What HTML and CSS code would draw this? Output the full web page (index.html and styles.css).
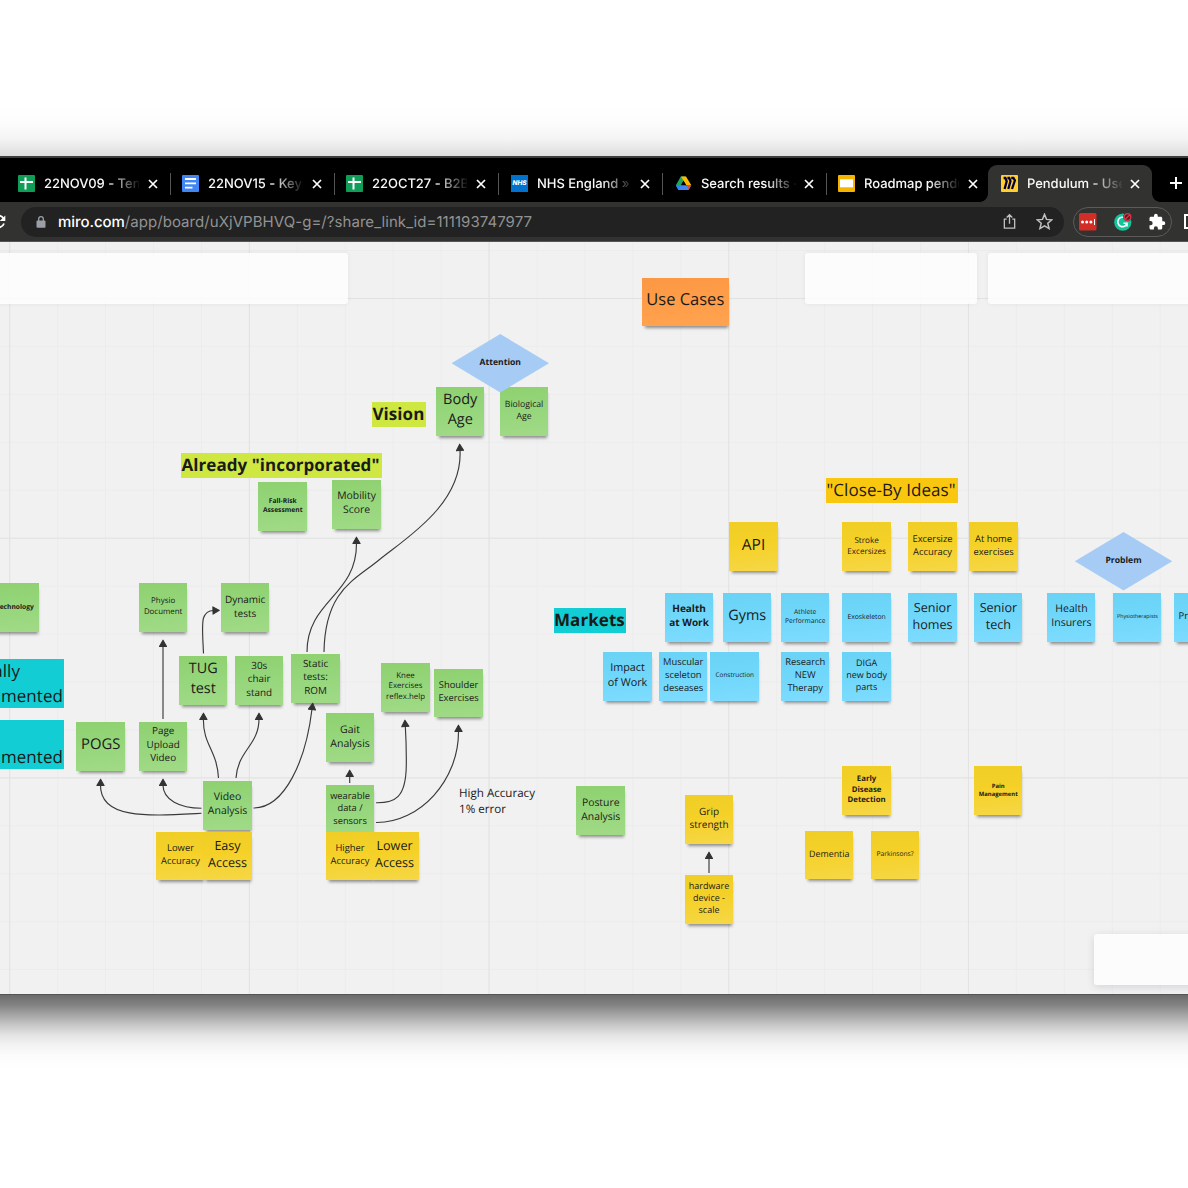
FILE: index.html
```html
<!DOCTYPE html>
<html lang="en">
<head>
<meta charset="utf-8">
<title>Pendulum - Use Cases</title>
<link rel="stylesheet" href="styles.css">
</head>
<body>
<div class="glow-top"></div>
<main class="window">
  <header class="tabs">
    <div class="tab first"><i class="sep"></i>
      <svg class="fav" viewBox="0 0 17 17"><rect width="17" height="17" rx="1" fill="#0f9d58"/><path d="M7.5 2.5v12M2 7h13" stroke="#fff" stroke-width="2"/></svg>
      <span class="title">22NOV09 - Tensor</span><svg class="close" viewBox="0 0 10 10"><path d="M1 1l8 8M9 1L1 9"/></svg></div>
    <div class="tab"><i class="sep"></i>
      <svg class="fav" viewBox="0 0 17 17"><rect width="17" height="17" rx="1" fill="#4285f4"/><path d="M3 4h11M3 8.3h11M3 12.6h7.500" stroke="#fff" stroke-width="1.800"/></svg>
      <span class="title">22NOV15 - Key P</span><svg class="close" viewBox="0 0 10 10"><path d="M1 1l8 8M9 1L1 9"/></svg></div>
    <div class="tab"><i class="sep"></i>
      <svg class="fav" viewBox="0 0 17 17"><rect width="17" height="17" rx="1" fill="#0f9d58"/><path d="M7.500 2.500v12M2 7h13" stroke="#fff" stroke-width="2"/></svg>
      <span class="title">22OCT27 - B2B S</span><svg class="close" viewBox="0 0 10 10"><path d="M1 1l8 8M9 1L1 9"/></svg></div>
    <div class="tab shifted"><i class="sep"></i>
      <span class="fav nhs">NHS</span>
      <span class="title">NHS England » S</span><svg class="close" viewBox="0 0 10 10"><path d="M1 1l8 8M9 1L1 9"/></svg></div>
    <div class="tab shifted"><i class="sep"></i>
      <svg class="fav" viewBox="0 0 17 17"><path d="M5.800 1.500h4.800L4 14.700 1 10z" fill="#1fa463"/><path d="M6 1.500h5L16.200 10H11z" fill="#ffba00"/><path d="M3.700 10.300h12.500L13.600 15H3.400L1 10.700z" fill="#4285f4"/><path d="M12 10h4.200l-2.500 4.600z" fill="#ea4335"/><path d="M1 10h4.700l-2.300 4.700z" fill="#2684fc"/><path d="M8.500 5.800L11 10H6z" fill="#000"/></svg>
      <span class="title">Search results - G</span><svg class="close" viewBox="0 0 10 10"><path d="M1 1l8 8M9 1L1 9"/></svg></div>
    <div class="tab"><i class="sep"></i>
      <svg class="fav" viewBox="0 0 17 17"><rect width="17" height="17" rx="1" fill="#f4b400"/><rect x="2" y="4.300" width="13" height="8" fill="#fff"/></svg>
      <span class="title">Roadmap pendulum</span><svg class="close" viewBox="0 0 10 10"><path d="M1 1l8 8M9 1L1 9"/></svg></div>
    <div class="tab active"><i class="sep"></i>
      <svg class="fav" viewBox="0 0 17 17"><rect width="17" height="17" rx="1" fill="#ffd02f"/><path d="M2.600 3h1.800l1.300 3.200L3.600 14M6.400 3h1.800l1.300 3L7.300 14M10.200 3h2.200l1.500 2.500L11 14" fill="none" stroke="#050038" stroke-width="2.300"/></svg>
      <span class="title">Pendulum - Use C</span><svg class="close" viewBox="0 0 10 10"><path d="M1 1l8 8M9 1L1 9"/></svg></div>
    <svg class="plus" viewBox="0 0 14 14"><path d="M7 1v12M1 7h12"/></svg>
  </header>
  <nav class="toolbar">
    <svg class="reload" viewBox="0 0 16 16"><path d="M13.500 4.500A6 6 0 1 0 14 9.500" fill="none" stroke="#fff" stroke-width="1.800"/><path d="M15.300 1.500v5.500H9.800z" fill="#fff"/></svg>
    <div class="omnibox">
      <svg class="lock" viewBox="0 0 10 12"><rect x=".5" y="4.500" width="9" height="7.300" rx="1" fill="#9aa0a6"/><path d="M2.700 5V3a2.300 2.300 0 0 1 4.600 0v2" fill="none" stroke="#9aa0a6" stroke-width="1.300"/></svg>
      <span class="url"><b>miro.com</b>/app/board/uXjVPBHVQ-g=/?share_link_id=111193747977</span>
      <svg class="share" viewBox="0 0 16 18"><path d="M5 6.500H2.500v9.500h11V6.500H11M8 11.500V2M5 4.800L8 1.800l3 3"/></svg>
      <svg class="star" viewBox="0 0 16 16"><path d="M8 1.300l1.900 4.700 5 .4-3.800 3.300 1.200 4.900L8 12l-4.300 2.600 1.200-4.900L1.100 6.400l5-.4z"/></svg>
    </div>
    <div class="extensions">
      <svg viewBox="0 0 18 18"><rect width="17.500" height="17.500" rx="1.500" fill="#d32d27"/><circle cx="3.500" cy="9" r="1.500" fill="#fff"/><circle cx="7.700" cy="9" r="1.500" fill="#fff"/><circle cx="11.900" cy="9" r="1.500" fill="#fff"/><path d="M15.500 6v6" stroke="#fff"/></svg>
      <svg viewBox="0 0 18 18"><circle cx="8.800" cy="9.200" r="8.600" fill="#15c39a"/><path d="M11.500 5.300A4.700 4.700 0 1 0 13 10.300H9.500M13 10v3.500" fill="none" stroke="#fff" stroke-width="1.600"/><circle cx="13.500" cy="4" r="4.300" fill="#323230"/><circle cx="13.500" cy="4" r="3.300" fill="#45232d" stroke="#e0324b" stroke-width="1.300"/><path d="M11.300 6.200l4.400-4.400" stroke="#e0324b" stroke-width="1.300"/></svg>
      <svg viewBox="0 0 24 24"><path d="M20.500 11H19V7c0-1.100-.9-2-2-2h-4V3.500a2.500 2.500 0 0 0-5 0V5H4c-1.100 0-2 .9-2 2v3.800h1.500a2.700 2.700 0 0 1 0 5.400H2V20c0 1.100.9 2 2 2h3.800v-1.500a2.700 2.700 0 0 1 5.400 0V22H17c1.100 0 2-.9 2-2v-4h1.500a2.500 2.500 0 0 0 0-5z" fill="#fff"/></svg>
    </div>
    <i class="panel-toggle"></i>
  </nav>
  <section class="board">
    <span class="label vision">Vision</span>
    <span class="label incorporated">Already "incorporated"</span>
    <span class="label ideas">"Close-By Ideas"</span>
    <span class="label markets">Markets</span>
    <div class="label status partial"><p>ally</p><p>mented</p></div>
    <div class="label status notyet"><p>&nbsp;</p><p>mented</p></div>
    <p class="caption">High Accuracy<br>1% error</p>

    <div class="note orange use-cases">Use Cases</div>
    <div class="note green body-age">Body<br>Age</div>
    <div class="note green small bio-age">Biological<br>Age</div>
    <div class="note green bold fall-risk">Fall-Risk<br>Assessment</div>
    <div class="note green mobility">Mobility<br>Score</div>
    <div class="note green bold small technology">Technology</div>
    <div class="note green small physio">Physio<br>Document</div>
    <div class="note green small dynamic">Dynamic<br>tests</div>
    <div class="note green tug">TUG<br>test</div>
    <div class="note green chair">30s<br>chair<br>stand</div>
    <div class="note green static">Static<br>tests:<br>ROM</div>
    <div class="note green small knee">Knee<br>Exercises<br>reflex.help</div>
    <div class="note green small shoulder">Shoulder<br>Exercises</div>
    <div class="note green pogs">POGS</div>
    <div class="note green upload">Page<br>Upload<br>Video</div>
    <div class="note green small gait">Gait<br>Analysis</div>
    <div class="note green video">Video<br>Analysis</div>
    <div class="note green small wearable">wearable<br>data /<br>sensors</div>
    <div class="note green small posture">Posture<br>Analysis</div>
    <div class="note yellow small lower-acc">Lower<br>Accuracy</div>
    <div class="note yellow easy">Easy<br>Access</div>
    <div class="note yellow small higher-acc">Higher<br>Accuracy</div>
    <div class="note yellow lower-access">Lower<br>Access</div>
    <div class="note yellow api">API</div>
    <div class="note yellow small stroke">Stroke<br>Excersizes</div>
    <div class="note yellow small accuracy">Excersize<br>Accuracy</div>
    <div class="note yellow small home">At home<br>exercises</div>
    <div class="note blue bold health-work">Health<br>at Work</div>
    <div class="note blue gyms">Gyms</div>
    <div class="note blue athlete">Athlete<br>Performance</div>
    <div class="note blue small exo">Exoskeleton</div>
    <div class="note blue senior-homes">Senior<br>homes</div>
    <div class="note blue senior-tech">Senior<br>tech</div>
    <div class="note blue insurers">Health<br>Insurers</div>
    <div class="note blue small physios">Physiotherapists</div>
    <div class="note blue small providers">Pr</div>
    <div class="note blue small impact">Impact<br>of Work</div>
    <div class="note blue small muscular">Muscular<br>sceleton<br>deseases</div>
    <div class="note blue small construction">Construction</div>
    <div class="note blue small research">Research<br>NEW<br>Therapy</div>
    <div class="note blue diga">DIGA<br>new body<br>parts</div>
    <div class="note yellow bold small early">Early<br>Disease<br>Detection</div>
    <div class="note yellow bold small pain">Pain<br>Management</div>
    <div class="note yellow small dementia">Dementia</div>
    <div class="note yellow parkinsons">Parkinsons?</div>
    <div class="note yellow grip">Grip<br>strength</div>
    <div class="note yellow hardware">hardware<br>device -<br>scale</div>
    <div class="diamond attention">Attention</div>
    <div class="diamond problem">Problem</div>

    <svg class="arrows" viewBox="0 241 1188 753">
      <defs><marker id="tip" viewBox="0 0 8 8" refX="1.500" refY="4" markerWidth="8.500" markerHeight="8.500" markerUnits="userSpaceOnUse" orient="auto"><path d="M1 .6L7 4 1 7.400z" fill="#333" stroke="#333" stroke-linejoin="round"/></marker></defs>
      <g fill="none" stroke="#3a3a3a" stroke-width="1.150" marker-end="url(#tip)">
        <path d="M163 719V646"/>
        <path d="M203.500 653.500C203 640 201.500 625 203.500 618Q206 610.700 213.500 610.500"/>
        <path d="M218.500 778C217 750 203 745 203.400 719"/>
        <path d="M236 778C238 750 259 745 259 719"/>
        <path d="M201.500 808.300C180 808 163 800 163 785"/>
        <path d="M201.500 813.300C150 816 100 820 100.500 785"/>
        <path d="M253.500 808C285 808 306 760 312 709"/>
        <path d="M307 652C307 600 357 596 356.500 543"/>
        <path d="M324 652C325 590 355 580 379 560S463 505 460 450"/>
        <path d="M349.700 783V776"/>
        <path d="M376 802.700C395 803 406 798 406.300 765Q406.500 745 405.300 726"/>
        <path d="M376 822.500C420 823 459 780 458.500 731"/>
        <path d="M709 873V858"/>
      </g>
    </svg>
    <div class="panel panel-left"></div>
    <div class="panel panel-mid"></div>
    <div class="panel panel-right"></div>
    <div class="panel panel-zoom"></div>
  </section>
</main>
<div class="glow-bottom"></div>
</body>
</html>
```
FILE: styles.css
```css
* { box-sizing: border-box; }
body { margin: 0; width: 1188px; height: 1188px; overflow: hidden; background: #fff; display: flex; flex-direction: column; text-rendering: geometricPrecision; }
p { margin: 0; }
.glow-top { height: 156px; flex: none; background: linear-gradient(#fff 105px, #fdfdfd 120px, #f5f5f5 138px, #dedede 156px); }
.glow-bottom { height: 193px; flex: none; background: linear-gradient(#6b6b6b 0, #838383 10px, #a5a5a5 20px, #c7c7c7 30px, #e3e3e3 40px, #f3f3f3 50px, #fcfcfc 62px, #fff 76px); }
.window { height: 839px; flex: none; display: flex; flex-direction: column; border-top: 2px solid #3d3d3d; overflow: hidden; }

/* tab strip */
.tabs { height: 44px; flex: none; background: #000; display: flex; align-items: flex-end; padding-left: 4px; overflow: hidden; }
.tab { width: 164px; height: 37px; flex: none; display: flex; align-items: center; padding-left: 2px; font: 500 13px/18px Inter, sans-serif; color: #f8f8f8; position: relative; }
.tab.active { background: #323230; border-radius: 9px 9px 0 0; }
.tab.active::before, .tab.active::after { content: ""; position: absolute; bottom: 0; width: 8px; height: 8px; }
.tab.active::before { left: -8px; background: radial-gradient(circle at 0 0, transparent 7.500px, #323230 8px); }
.tab.active::after { right: -8px; background: radial-gradient(circle at 100% 0, transparent 7.500px, #323230 8px); }
.sep { width: 1px; height: 22px; background: #555; margin-right: 11px; flex: none; }
.first .sep, .active .sep { visibility: hidden; }
.shifted .sep { margin-right: 12px; }
.active .sep { margin-right: 10px; }
.fav { width: 17px; height: 17px; flex: none; margin-right: 9px; }
.nhs { background: #0072ce; color: #fff; font: italic 800 6.500px/17px Inter, sans-serif; text-align: center; }
.title { width: 95px; flex: none; white-space: nowrap; overflow: hidden; letter-spacing: -.03px; mask-image: linear-gradient(90deg, #000 65px, transparent 97px); }
.close { width: 10px; height: 10px; margin-left: 9px; flex: none; fill: none; stroke: #fff; stroke-width: 1.700; }
.shifted .close, .active .close { margin-left: 8.300px; }
.plus { width: 14px; height: 14px; flex: none; margin: 0 0 12px 17px; fill: none; stroke: #fff; stroke-width: 2; }

/* toolbar */
.toolbar { height: 40px; flex: none; background: #323230; display: flex; align-items: center; border-bottom: 1px solid #555; margin-bottom: -1px; position: relative; z-index: 1; }
.reload { width: 16px; height: 16px; margin-left: -10px; flex: none; }
.omnibox { width: 1043px; height: 30px; margin-left: 15px; flex: none; border-radius: 15px; background: #222; display: flex; align-items: center; padding: 0 11px 0 15px; }
.lock { width: 10px; height: 12px; margin-right: 12px; }
.url { flex: 1; font: 400 15px/20px Inter, sans-serif; letter-spacing: .055px; color: #929292; white-space: nowrap; }
.url b { font-weight: 500; color: #fff; letter-spacing: -.06px; }
.share, .star { fill: none; stroke: #c0c0c0; stroke-width: 1.400; }
.share { width: 15px; height: 17px; margin-right: 19px; }
.star { width: 17px; height: 17px; }
.extensions { width: 99px; height: 30px; margin-left: 9px; flex: none; border: 1px solid #5b5b5b; border-radius: 15px; display: flex; align-items: center; justify-content: space-between; padding: 0 5px; }
.extensions svg { width: 18px; height: 18px; flex: none; }
.panel-toggle { width: 15px; height: 15px; flex: none; margin-left: 12px; border: 2px solid #fff; }

/* board canvas */
.board { height: 754px; flex: none; position: relative; overflow: hidden; border-bottom: 1px solid #555; background-color: #f1f1f1; font-family: "Open Sans", sans-serif; color: #1a1a1a;
  background-image: linear-gradient(90deg, #e2e2e2 1px, transparent 1px), linear-gradient(#e2e2e2 1px, transparent 1px), linear-gradient(90deg, #ececec 1px, transparent 1px), linear-gradient(#ececec 1px, transparent 1px);
  background-size: 239.700px 100%, 100% 239.700px, 47.940px 100%, 100% 47.940px;
  background-position: 9.200px 0, 0 57px, 9.200px 0, 0 9px; }
.arrows { position: absolute; left: 0; top: 0; width: 1188px; height: 753px; }
.label { position: absolute; font-size: 17px; letter-spacing: .06px; line-height: 24.500px; white-space: nowrap; }
.vision { left: 372px; top: 161px; width: 53.500px; padding-left: .5px; background: #cee741; font-weight: 700; }
.incorporated { left: 181px; top: 212px; width: 201px; padding-left: .5px; background: #cee741; font-weight: 700; }
.ideas { left: 826px; top: 237px; width: 132.300px; padding-left: .5px; background: #fac710; }
.markets { left: 554px; top: 367px; width: 72.400px; background: #12cdd4; font-weight: 700; }
.status { left: 0; width: 64px; height: 49px; background: #12cdd4; text-align: right; padding-right: 1px; }
.status p:first-child { padding-right: 43px; margin-left: -20px; }
.partial { top: 418px; }
.notyet { top: 479px; }
.caption { position: absolute; left: 459px; top: 544.800px; font-size: 11.600px; line-height: 16.200px; white-space: nowrap; }
.note { position: absolute; left: calc(var(--x) - .3px); top: calc(var(--y) - 241.300px); width: 48.500px; height: 48.500px; padding: 0 0 2.800px .6px; display: flex; align-items: center; justify-content: center; text-align: center; white-space: nowrap; font-size: var(--s); line-height: 1.360; box-shadow: 1px 4px 3px -2px rgba(0, 0, 0, .42); }
.small { padding-bottom: 1.300px; }
.bold { font-weight: 700; }
.green { background: linear-gradient(175deg, #8fd070, #95d67b 45%, #a1da86); }
.yellow { background: linear-gradient(175deg, #f0ce25, #f5d128 45%, #f6d746); }
.blue { background: linear-gradient(175deg, #69d2f5, #6fd7fa 45%, #7edcff); }
.orange { background: linear-gradient(175deg, #fb9845, #ff9d48 50%, #ffa350); }
.use-cases { --x: 641.800px; --y: 277.800px; --s: 16.500px; width: 87.500px; padding: 0 0 4.500px; }
.body-age { --x: 436px; --y: 387.500px; --s: 14.500px; }
.bio-age { --x: 499.800px; --y: 387.500px; --s: 8.700px; }
.fall-risk { --x: 258.500px; --y: 482.500px; --s: 6.700px; }
.mobility { --x: 332.300px; --y: 480.500px; --s: 10.400px; }
.technology { --x: -9.500px; --y: 583.500px; --s: 6.700px; }
.physio { --x: 138.900px; --y: 583.500px; --s: 7.900px; }
.dynamic { --x: 220.900px; --y: 583.500px; --s: 10px; }
.tug { --x: 179px; --y: 656.500px; --s: 14.400px; }
.chair { --x: 235px; --y: 656.500px; --s: 9.900px; }
.static { --x: 291.300px; --y: 654.500px; --s: 9.900px; }
.knee { --x: 381.300px; --y: 663.500px; --s: 7.900px; }
.shoulder { --x: 434.300px; --y: 668.800px; --s: 9.400px; }
.pogs { --x: 76.500px; --y: 722.300px; --s: 14.800px; padding-bottom: 4px; }
.upload { --x: 138.900px; --y: 722.300px; --s: 9.900px; padding-bottom: 4px; }
.gait { --x: 325.800px; --y: 713.500px; --s: 10.500px; }
.video { --x: 203.300px; --y: 781.300px; --s: 10.500px; }
.wearable { --x: 325.800px; --y: 785.500px; --s: 9.300px; }
.posture { --x: 576.500px; --y: 786.500px; --s: 10.400px; }
.lower-acc { --x: 156.300px; --y: 831.800px; --s: 9.400px; }
.easy { --x: 203.300px; --y: 831.800px; --s: 12.600px; }
.higher-acc { --x: 325.800px; --y: 831.800px; --s: 9.400px; }
.lower-access { --x: 370.300px; --y: 831.800px; --s: 12.600px; }
.api { --x: 729.300px; --y: 522.700px; --s: 15.500px; padding-bottom: 4px; }
.stroke { --x: 842.300px; --y: 522.700px; --s: 8.100px; }
.accuracy { --x: 908.300px; --y: 522.700px; --s: 9.400px; }
.home { --x: 969.300px; --y: 522.700px; --s: 9.400px; }
.health-work { --x: 664.800px; --y: 593.300px; --s: 10px; }
.gyms { --x: 723px; --y: 593.300px; --s: 14.400px; }
.athlete { --x: 781px; --y: 593.300px; --s: 6.700px; }
.exo { --x: 842.300px; --y: 593.300px; --s: 6.800px; }
.senior-homes { --x: 908.300px; --y: 593.300px; --s: 12.600px; }
.senior-tech { --x: 974.200px; --y: 593.300px; --s: 12.600px; }
.insurers { --x: 1047.200px; --y: 593.300px; --s: 10.500px; }
.physios { --x: 1113.200px; --y: 593.300px; --s: 5.300px; }
.providers { --x: 1174.300px; --y: 593.300px; --s: 9.500px; justify-content: flex-start; padding-left: 4.500px; }
.impact { --x: 603.300px; --y: 652.300px; --s: 10.800px; }
.muscular { --x: 659px; --y: 652.300px; --s: 9.400px; }
.construction { --x: 710.500px; --y: 652.300px; --s: 6.400px; }
.research { --x: 781px; --y: 652.300px; --s: 9.400px; }
.diga { --x: 842.300px; --y: 652.300px; --s: 9px; }
.early { --x: 842.300px; --y: 766.700px; --s: 7.800px; }
.pain { --x: 974px; --y: 766.700px; --s: 5.900px; }
.dementia { --x: 805px; --y: 830.800px; --s: 8.900px; }
.parkinsons { --x: 870.800px; --y: 830.800px; --s: 6.700px; }
.grip { --x: 684.800px; --y: 795.700px; --s: 10px; }
.hardware { --x: 684.800px; --y: 875.500px; --s: 9px; }
.diamond { position: absolute; width: 97.500px; height: 58.500px; clip-path: polygon(50% 0, 100% 50%, 50% 100%, 0 50%); background: #a6ccf5; display: flex; align-items: center; justify-content: center; padding-bottom: 2px; font-size: 8.600px; font-weight: 700; }
.attention { left: 451.500px; top: 93px; }
.problem { left: 1074.800px; top: 291px; }
.panel { position: absolute; top: 11.600px; height: 51.500px; background: rgba(255, 255, 255, .8); border-radius: 3px; box-shadow: 0 0 5px rgba(5, 0, 56, .06); }
.panel-left { left: -10px; width: 357.600px; }
.panel-mid { left: 805px; width: 172.400px; }
.panel-right { left: 988px; width: 210px; }
.panel-zoom { left: 1094px; top: 692.500px; width: 104px; box-shadow: 0 2px 8px rgba(5, 0, 56, .12); }
```
